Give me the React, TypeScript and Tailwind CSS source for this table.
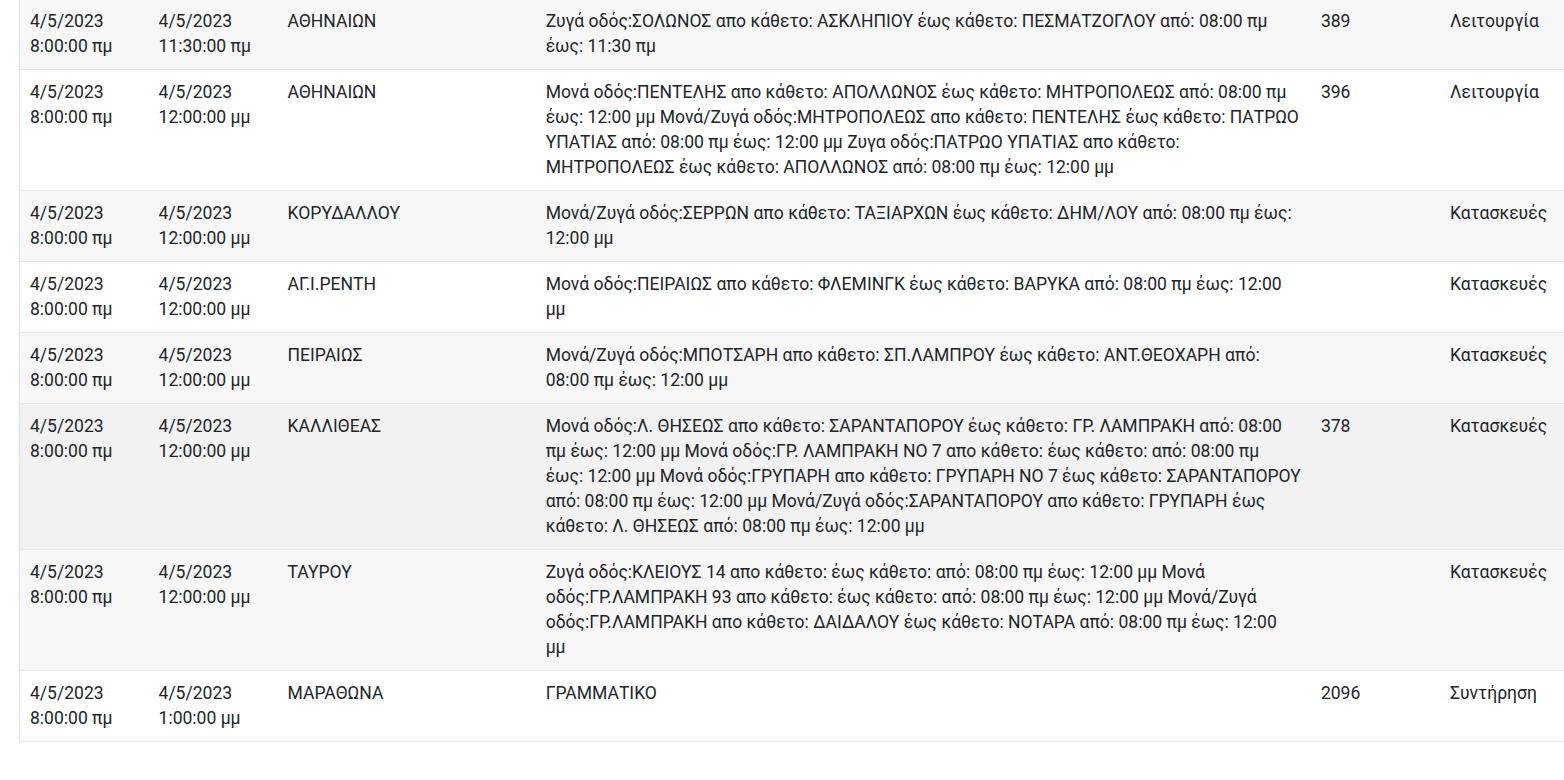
type Row = {
  from: [string, string];
  to: [string, string];
  area: string;
  desc: string;
  code: string;
  kind: string;
  tone: "gray" | "white" | "hover";
};

const rows: Row[] = [
  {
    from: ["4/5/2023", "8:00:00 πμ"],
    to: ["4/5/2023", "11:30:00 πμ"],
    area: "ΑΘΗΝΑΙΩΝ",
    desc: "Ζυγά οδός:ΣΟΛΩΝΟΣ απο κάθετο: ΑΣΚΛΗΠΙΟΥ έως κάθετο: ΠΕΣΜΑΤΖΟΓΛΟΥ από: 08:00 πμ έως: 11:30 πμ",
    code: "389",
    kind: "Λειτουργία",
    tone: "gray",
  },
  {
    from: ["4/5/2023", "8:00:00 πμ"],
    to: ["4/5/2023", "12:00:00 μμ"],
    area: "ΑΘΗΝΑΙΩΝ",
    desc: "Μονά οδός:ΠΕΝΤΕΛΗΣ απο κάθετο: ΑΠΟΛΛΩΝΟΣ έως κάθετο: ΜΗΤΡΟΠΟΛΕΩΣ από: 08:00 πμ έως: 12:00 μμ Μονά/Ζυγά οδός:ΜΗΤΡΟΠΟΛΕΩΣ απο κάθετο: ΠΕΝΤΕΛΗΣ έως κάθετο: ΠΑΤΡΩΟ ΥΠΑΤΙΑΣ από: 08:00 πμ έως: 12:00 μμ Ζυγα οδός:ΠΑΤΡΩΟ ΥΠΑΤΙΑΣ απο κάθετο: ΜΗΤΡΟΠΟΛΕΩΣ έως κάθετο: ΑΠΟΛΛΩΝΟΣ από: 08:00 πμ έως: 12:00 μμ",
    code: "396",
    kind: "Λειτουργία",
    tone: "white",
  },
  {
    from: ["4/5/2023", "8:00:00 πμ"],
    to: ["4/5/2023", "12:00:00 μμ"],
    area: "ΚΟΡΥΔΑΛΛΟΥ",
    desc: "Μονά/Ζυγά οδός:ΣΕΡΡΩΝ απο κάθετο: ΤΑΞΙΑΡΧΩΝ έως κάθετο: ΔΗΜ/ΛΟΥ από: 08:00 πμ έως: 12:00 μμ",
    code: "",
    kind: "Κατασκευές",
    tone: "gray",
  },
  {
    from: ["4/5/2023", "8:00:00 πμ"],
    to: ["4/5/2023", "12:00:00 μμ"],
    area: "ΑΓ.Ι.ΡΕΝΤΗ",
    desc: "Μονά οδός:ΠΕΙΡΑΙΩΣ απο κάθετο: ΦΛΕΜΙΝΓΚ έως κάθετο: ΒΑΡΥΚΑ από: 08:00 πμ έως: 12:00 μμ",
    code: "",
    kind: "Κατασκευές",
    tone: "white",
  },
  {
    from: ["4/5/2023", "8:00:00 πμ"],
    to: ["4/5/2023", "12:00:00 μμ"],
    area: "ΠΕΙΡΑΙΩΣ",
    desc: "Μονά/Ζυγά οδός:ΜΠΟΤΣΑΡΗ απο κάθετο: ΣΠ.ΛΑΜΠΡΟΥ έως κάθετο: ΑΝΤ.ΘΕΟΧΑΡΗ από: 08:00 πμ έως: 12:00 μμ",
    code: "",
    kind: "Κατασκευές",
    tone: "gray",
  },
  {
    from: ["4/5/2023", "8:00:00 πμ"],
    to: ["4/5/2023", "12:00:00 μμ"],
    area: "ΚΑΛΛΙΘΕΑΣ",
    desc: "Μονά οδός:Λ. ΘΗΣΕΩΣ απο κάθετο: ΣΑΡΑΝΤΑΠΟΡΟΥ έως κάθετο: ΓΡ. ΛΑΜΠΡΑΚΗ από: 08:00 πμ έως: 12:00 μμ Μονά οδός:ΓΡ. ΛΑΜΠΡΑΚΗ ΝΟ 7 απο κάθετο: έως κάθετο: από: 08:00 πμ έως: 12:00 μμ Μονά οδός:ΓΡΥΠΑΡΗ απο κάθετο: ΓΡΥΠΑΡΗ ΝΟ 7 έως κάθετο: ΣΑΡΑΝΤΑΠΟΡΟΥ από: 08:00 πμ έως: 12:00 μμ Μονά/Ζυγά οδός:ΣΑΡΑΝΤΑΠΟΡΟΥ απο κάθετο: ΓΡΥΠΑΡΗ έως κάθετο: Λ. ΘΗΣΕΩΣ από: 08:00 πμ έως: 12:00 μμ",
    code: "378",
    kind: "Κατασκευές",
    tone: "hover",
  },
  {
    from: ["4/5/2023", "8:00:00 πμ"],
    to: ["4/5/2023", "12:00:00 μμ"],
    area: "ΤΑΥΡΟΥ",
    desc: "Ζυγά οδός:ΚΛΕΙΟΥΣ 14 απο κάθετο: έως κάθετο: από: 08:00 πμ έως: 12:00 μμ Μονά οδός:ΓΡ.ΛΑΜΠΡΑΚΗ 93 απο κάθετο: έως κάθετο: από: 08:00 πμ έως: 12:00 μμ Μονά/Ζυγά οδός:ΓΡ.ΛΑΜΠΡΑΚΗ απο κάθετο: ΔΑΙΔΑΛΟΥ έως κάθετο: ΝΟΤΑΡΑ από: 08:00 πμ έως: 12:00 μμ",
    code: "",
    kind: "Κατασκευές",
    tone: "gray",
  },
  {
    from: ["4/5/2023", "8:00:00 πμ"],
    to: ["4/5/2023", "1:00:00 μμ"],
    area: "ΜΑΡΑΘΩΝΑ",
    desc: "ΓΡΑΜΜΑΤΙΚΟ",
    code: "2096",
    kind: "Συντήρηση",
    tone: "white",
  },
];

const toneClass = {
  gray: "bg-[#f7f7f7]",
  white: "bg-white",
  hover: "bg-[#f2f2f2]",
};

const cell = "px-[10px] py-[10px] align-top";

export default function App() {
  return (
    <div className="h-[780px] w-[1564px] overflow-hidden bg-white font-['Roboto',sans-serif] text-[17.55px] leading-[25px] text-[#212529]">
      <div className="-mt-[2px] pl-[19px]">
        <table className="w-[1550px] table-fixed border-collapse border-l border-[#e6e6e6]">
          <colgroup>
            <col className="w-[129px]" />
            <col className="w-[129px]" />
            <col className="w-[258px]" />
            <col className="w-[775px]" />
            <col className="w-[129px]" />
            <col className="w-[129px]" />
          </colgroup>
          <tbody>
            {rows.map((r, i) => (
              <tr key={i} className={`border-t border-b border-[#e6e6e6] ${toneClass[r.tone]}`}>
                <td className={cell}>
                  {r.from[0]}
                  <br />
                  {r.from[1]}
                </td>
                <td className={cell}>
                  {r.to[0]}
                  <br />
                  {r.to[1]}
                </td>
                <td className={cell}>{r.area}</td>
                <td className={cell}>{r.desc}</td>
                <td className={cell}>{r.code}</td>
                <td className={`${cell} whitespace-nowrap`}>{r.kind}</td>
              </tr>
            ))}
          </tbody>
        </table>
      </div>
    </div>
  );
}
